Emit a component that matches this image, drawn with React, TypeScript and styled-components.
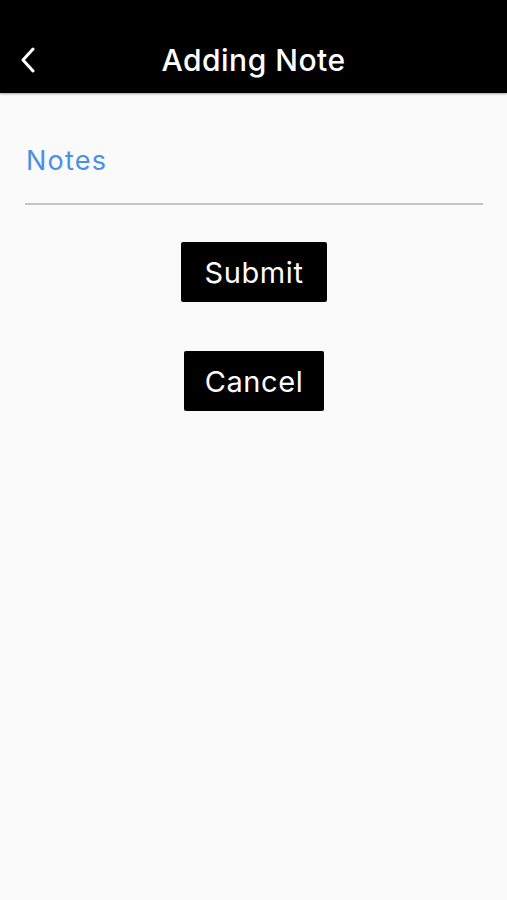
import React from "react";
import styled, { createGlobalStyle } from "styled-components";

const Global = createGlobalStyle`
  html, body { margin: 0; padding: 0; background: #fafafa; }
  body { font-family: Inter, "Noto Sans", Roboto, sans-serif; }
  * { box-sizing: border-box; }
`;

const Screen = styled.div`
  width: 507px;
  height: 900px;
  background: #fafafa;
  display: flex;
  flex-direction: column;
`;

const Header = styled.header`
  height: 93px;
  background: #000;
  display: grid;
  grid-template-columns: 60px 1fr 60px;
  align-items: center;
  padding-top: 26px;
  box-shadow: 0 1px 2px rgba(0, 0, 0, 0.35);
  position: relative;
  z-index: 1;
`;

const BackButton = styled.button`
  background: none;
  border: none;
  padding: 0 0 0 20px;
  height: 26px;
  display: flex;
  align-items: center;
  cursor: pointer;
`;

const Title = styled.h1`
  margin: 0;
  color: #fff;
  font-size: 30px;
  font-weight: 500;
  letter-spacing: 0.5px;
  text-align: center;
  line-height: 34px;
`;

const Content = styled.main`
  padding: 0 24px 0 25px;
  display: flex;
  flex-direction: column;
  align-items: center;
`;

const Field = styled.label`
  align-self: stretch;
  display: block;
  padding-top: 51px;
  border-bottom: 2px solid #c4c4c4;
  padding-bottom: 25px;
  margin-bottom: 37px;
`;

const Placeholder = styled.span`
  display: block;
  color: #4a8fe7;
  font-size: 27px;
  letter-spacing: 1.2px;
  line-height: 34px;
  padding-left: 1px;
`;

const ActionButton = styled.button<{ $gap?: number; $padX?: number }>`
  background: #000;
  color: #fff;
  border: none;
  border-radius: 2px;
  font-family: Inter, "Noto Sans", sans-serif;
  font-size: 29px;
  letter-spacing: 0.6px;
  font-weight: 400;
  height: 60px;
  padding: 0 ${(p) => p.$padX ?? 23}px;
  margin-bottom: ${(p) => p.$gap ?? 0}px;
  cursor: pointer;
`;

export default function App() {
  return (
    <Screen>
      <Global />
      <Header>
        <BackButton aria-label="Back">
          <svg width="16" height="26" viewBox="0 0 16 26" fill="none">
            <path d="M13 2 L3 13 L13 24" stroke="#fff" strokeWidth="3" strokeLinecap="round" strokeLinejoin="round" />
          </svg>
        </BackButton>
        <Title>Adding Note</Title>
        <span />
      </Header>
      <Content>
        <Field>
          <Placeholder>Notes</Placeholder>
        </Field>
        <ActionButton $gap={49}>Submit</ActionButton>
        <ActionButton $padX={21}>Cancel</ActionButton>
      </Content>
    </Screen>
  );
}
